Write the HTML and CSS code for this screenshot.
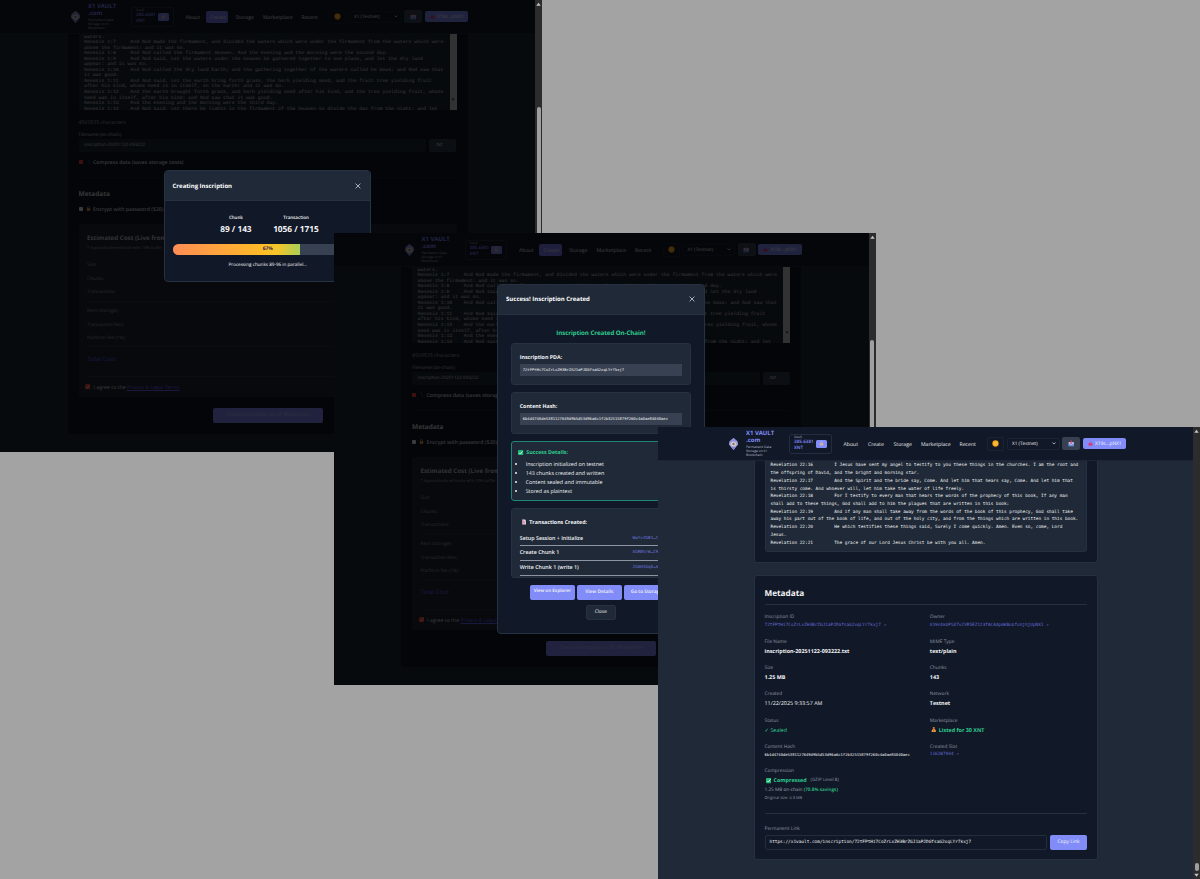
FILE: index.html
```html
<!DOCTYPE html>
<html lang="en">
<head>
<meta charset="utf-8">
<title>X1 Vault</title>
<link rel="stylesheet" href="styles.css">
</head>
<body>
<svg width="0" height="0" class="defs">
  <symbol id="logo" viewBox="0 0 18 24"><path d="M9 0 17 7 18 13 9 24 0 13 1 7Z" fill="#a5a8d8"/><path d="M9 0 17 7 9 10 1 7Z" fill="#8d92e0"/><circle cx="9" cy="12" r="5" fill="#d9cfc4"/><circle cx="9" cy="12" r="2.4" fill="#776f80"/><path d="M3 17 9 18 15 17 9 24Z" fill="#7b80cf"/></symbol>
  <symbol id="sun" viewBox="0 0 20 20"><circle cx="10" cy="10" r="9" fill="#f59e0b"/><circle cx="10" cy="10" r="6.5" fill="#fdb73e"/></symbol>
  <symbol id="lock" viewBox="0 0 20 20"><path d="M6 10V6a4 4 0 0 1 8 0v4" fill="none" stroke="#c9b8b0" stroke-width="2.4"/><rect x="3" y="9" width="14" height="10" rx="2" fill="#f2a33a"/></symbol>
  <symbol id="coin" viewBox="0 0 20 20"><path d="M6 10V6a4 4 0 0 1 8 0v4" fill="none" stroke="#cfc4d8" stroke-width="2.4"/><rect x="3" y="9" width="14" height="9" rx="2" fill="#d9b29a"/></symbol>
  <symbol id="redlock" viewBox="0 0 20 20"><path d="M6 10V7a4 4 0 0 1 8 0v3" fill="none" stroke="#b0589a" stroke-width="2.4"/><rect x="2" y="9" width="16" height="9" rx="2" fill="#e0306a"/></symbol>
  <symbol id="inbox" viewBox="0 0 20 20"><path d="M2 6h16v13H2Z" fill="#b9c3ee"/><path d="M10 1v10M6 8l4 4 4-4" fill="none" stroke="#e0457b" stroke-width="2.6"/><path d="M2 13h5l1 2h4l1-2h5v6H2Z" fill="#5b8de0"/></symbol>
  <symbol id="chev" viewBox="0 0 10 6"><path d="M1 1 5 5 9 1" fill="none" stroke="#e5e7eb" stroke-width="1.8"/></symbol>
  <symbol id="close" viewBox="0 0 10 10"><path d="M1 1 9 9M9 1 1 9" fill="none" stroke="#d1d5db" stroke-width="1.3"/></symbol>
  <symbol id="okbox" viewBox="0 0 20 20"><rect width="20" height="20" rx="3" fill="#22b573"/><path d="M4 10 8.5 14.500 16 5" fill="none" stroke="#e9fff5" stroke-width="3"/></symbol>
  <symbol id="doc" viewBox="0 0 16 20"><path d="M1 1h10l4 4v14H1Z" fill="#e5d6e4"/><path d="M4 8h8M4 11h8M4 14h8" stroke="#b76a94" stroke-width="1.5"/><path d="M1 1h4v18H1Z" fill="#d08aa8"/></symbol>
  <symbol id="bag" viewBox="0 0 20 20"><path d="M6 1h8l-2 5c4 3 6 6 6 9 0 3-3 4-8 4s-8-1-8-4c0-3 2-6 6-9Z" fill="#f0a040"/><path d="M10 9v7M8 11h4M8 14h4" stroke="#8a4a10" stroke-width="1.6"/><path d="M6 5h8" stroke="#d33d2a" stroke-width="2"/></symbol>
  <symbol id="zip" viewBox="0 0 20 20"><path d="M6 2c6 0 2 8 6 8s-2 8 4 8" fill="none" stroke="#5560c0" stroke-width="2.500"/></symbol>
  <symbol id="tick" viewBox="0 0 20 20"><rect width="20" height="20" rx="4" fill="#f04438"/><path d="M4 10 8.500 14.500 16 5" fill="none" stroke="#fff" stroke-width="2.600"/></symbol>
  <symbol id="up" viewBox="0 0 10 8"><path d="M5 1 9.500 7H.5Z" fill="#c4c4c4"/></symbol>
</svg>

<main class="desktop">

  <section class="window w1">
    <div class="page">
      <header class="top">
        <svg class="logo"><use href="#logo"/></svg>
        <div class="brand"><b>X1 VAULT<br>.com</b><small>Permanent Data<br>Storage on X1<br>Blockchain</small></div>
        <div class="vault"><div class="bal"><small>Vault</small><span>385.6381<br>XNT</span></div><i class="lockbtn"><svg><use href="#coin"/></svg></i></div>
        <nav><a>About</a><a class="on">Create</a><a>Storage</a><a>Marketplace</a><a>Recent</a></nav>
        <i class="theme"><svg><use href="#sun"/></svg></i>
        <div class="select">X1 (Testnet)<svg><use href="#chev"/></svg></div>
        <i class="inbox"><svg><use href="#inbox"/></svg></i>
        <div class="addr"><svg><use href="#redlock"/></svg>X19s...pNX1</div>
      </header>
      <div class="form">
        <div class="area"><pre>waters.
Genesis 1:7	And God made the firmament, and divided the waters which were under the firmament from the waters which were
above the firmament: and it was so.
Genesis 1:8	And God called the firmament Heaven. And the evening and the morning were the second day.
Genesis 1:9	And God said, Let the waters under the heaven be gathered together to one place, and let the dry land
appear: and it was so.
Genesis 1:10	And God called the dry land Earth; and the gathering together of the waters called he Seas: and God saw that
it was good.
Genesis 1:11	And God said, Let the earth bring forth grass, the herb yielding seed, and the fruit tree yielding fruit
after his kind, whose seed is in itself, on the earth: and it was so.
Genesis 1:12	And the earth brought forth grass, and herb yielding seed after his kind, and the tree yielding fruit, whose
seed was in itself, after his kind: and God saw that it was good.
Genesis 1:13	And the evening and the morning were the third day.
Genesis 1:14	And God said, Let there be lights in the firmament of the heaven to divide the day from the night; and let</pre><div class="bar"><svg><use href="#up"/></svg></div></div>
        <p class="chars">4509535 characters</p>
        <p class="flabel">Filename (on-chain)</p>
        <div class="fname"><div class="inp">inscription-20251122-093222</div><div class="ext">.txt</div></div>
        <p class="check"><i class="dot"></i><svg><use href="#zip"/></svg><b>Compress data (saves storage costs)</b></p>
        <h3>Metadata</h3>
        <p class="check enc"><i class="box"></i><svg><use href="#lock"/></svg><b>Encrypt with password ($20)</b></p>
        <div class="cost">
          <h4>Estimated Cost (Live from Blockchain)</h4>
          <p class="sub">* Approximate estimate with 10% buffer</p>
          <ul><li>Size:</li><li>Chunks:</li><li>Transactions:</li></ul>
          <ul><li>Rent (storage):</li><li>Transaction fees:</li><li>Platform fee (1%):</li></ul>
          <p class="total">Total Cost:</p>
          <p class="agree"><svg><use href="#tick"/></svg>I agree to the&nbsp;<u>Privacy &amp; Legal Terms</u></p>
        </div>
        <div class="submit">Create Inscription on X1 Blockchain</div>
      </div>
      <div class="overlay">
        <div class="modal">
          <div class="mhead">Creating Inscription<svg><use href="#close"/></svg></div>
          <div class="mbody progress">
            <div class="stats"><div><small>Chunk</small><b>89 / 143</b></div><div><small>Transaction</small><b>1056 / 1715</b></div></div>
            <div class="track"><div class="fill" style="width:67%"></div><span>67%</span></div>
            <p>Processing chunks 89-96 in parallel...</p>
          </div>
        </div>
      </div>
    </div>
    <div class="scroll"><svg><use href="#up"/></svg><div class="thumb"></div></div>
  </section>

  <section class="window w2">
    <div class="page">
      <header class="top">
        <svg class="logo"><use href="#logo"/></svg>
        <div class="brand"><b>X1 VAULT<br>.com</b><small>Permanent Data<br>Storage on X1<br>Blockchain</small></div>
        <div class="vault"><div class="bal"><small>Vault</small><span>385.6381<br>XNT</span></div><i class="lockbtn"><svg><use href="#coin"/></svg></i></div>
        <nav><a>About</a><a class="on">Create</a><a>Storage</a><a>Marketplace</a><a>Recent</a></nav>
        <i class="theme"><svg><use href="#sun"/></svg></i>
        <div class="select">X1 (Testnet)<svg><use href="#chev"/></svg></div>
        <i class="inbox"><svg><use href="#inbox"/></svg></i>
        <div class="addr"><svg><use href="#redlock"/></svg>X19s...pNX1</div>
      </header>
      <div class="form">
        <div class="area"><pre>waters.
Genesis 1:7	And God made the firmament, and divided the waters which were under the firmament from the waters which were
above the firmament: and it was so.
Genesis 1:8	And God called the firmament Heaven. And the evening and the morning were the second day.
Genesis 1:9	And God said, Let the waters under the heaven be gathered together to one place, and let the dry land
appear: and it was so.
Genesis 1:10	And God called the dry land Earth; and the gathering together of the waters called he Seas: and God saw that
it was good.
Genesis 1:11	And God said, Let the earth bring forth grass, the herb yielding seed, and the fruit tree yielding fruit
after his kind, whose seed is in itself, on the earth: and it was so.
Genesis 1:12	And the earth brought forth grass, and herb yielding seed after his kind, and the tree yielding fruit, whose
seed was in itself, after his kind: and God saw that it was good.
Genesis 1:13	And the evening and the morning were the third day.
Genesis 1:14	And God said, Let there be lights in the firmament of the heaven to divide the day from the night; and let</pre><div class="bar"><svg><use href="#up"/></svg></div></div>
        <p class="chars">4509535 characters</p>
        <p class="flabel">Filename (on-chain)</p>
        <div class="fname"><div class="inp">inscription-20251122-093222</div><div class="ext">.txt</div></div>
        <p class="check"><i class="dot"></i><svg><use href="#zip"/></svg><b>Compress data (saves storage costs)</b></p>
        <h3>Metadata</h3>
        <p class="check enc"><i class="box"></i><svg><use href="#lock"/></svg><b>Encrypt with password ($20)</b></p>
        <div class="cost">
          <h4>Estimated Cost (Live from Blockchain)</h4>
          <p class="sub">* Approximate estimate with 10% buffer</p>
          <ul><li>Size:</li><li>Chunks:</li><li>Transactions:</li></ul>
          <ul><li>Rent (storage):</li><li>Transaction fees:</li><li>Platform fee (1%):</li></ul>
          <p class="total">Total Cost:</p>
          <p class="agree"><svg><use href="#tick"/></svg>I agree to the&nbsp;<u>Privacy &amp; Legal Terms</u></p>
        </div>
        <div class="submit">Create Inscription on X1 Blockchain</div>
      </div>
      <div class="overlay">
        <div class="modal tall">
          <div class="mhead">Success! Inscription Created<svg><use href="#close"/></svg></div>
          <div class="mbody success">
            <h2>Inscription Created On-Chain!</h2>
            <div class="card"><b>Inscription PDA:</b><code>72tFPtHi7CoZrLxZH3BrZGJ1aPJDGfsaG2xqLYr7kxj7</code></div>
            <div class="card"><b>Content Hash:</b><code class="hash">6b4d4740de5381127649d9b5d53d96a6c1f2b32515879f260c4a0ae84040aec</code></div>
            <div class="card green"><b><svg><use href="#okbox"/></svg>Success Details:</b><ul><li>Inscription initialized on testnet</li><li>143 chunks created and written</li><li>Content sealed and immutable</li><li>Stored as plaintext</li></ul></div>
            <div class="card txs"><b><svg><use href="#doc"/></svg>Transactions Created:</b>
              <div class="tx">Setup Session + Initialize<a>WwYvZGB1…t8kPq2</a></div>
              <div class="tx">Create Chunk 1<a>XGRB5rW…C9fLwa</a></div>
              <div class="tx">Write Chunk 1 (write 1)<a>2GAH5Gq6…m4TsxV</a></div>
            </div>
            <div class="btns"><span class="ex">View on Explorer</span><span>View Details</span><span>Go to Storage</span></div>
            <div class="closebtn">Close</div>
          </div>
        </div>
      </div>
    </div>
    <div class="scroll"><svg><use href="#up"/></svg><div class="thumb"></div></div>
  </section>

  <section class="window w3">
    <div class="page">
      <header class="top">
        <svg class="logo"><use href="#logo"/></svg>
        <div class="brand"><b>X1 VAULT<br>.com</b><small>Permanent Data<br>Storage on X1<br>Blockchain</small></div>
        <div class="vault"><div class="bal"><small>Vault</small><span>385.6381<br>XNT</span></div><i class="lockbtn"><svg><use href="#coin"/></svg></i></div>
        <nav><a>About</a><a>Create</a><a>Storage</a><a>Marketplace</a><a>Recent</a></nav>
        <i class="theme"><svg><use href="#sun"/></svg></i>
        <div class="select">X1 (Testnet)<svg><use href="#chev"/></svg></div>
        <i class="inbox"><svg><use href="#inbox"/></svg></i>
        <div class="addr"><svg><use href="#redlock"/></svg>X19s...pNX1</div>
      </header>
      <div class="panel reader"><pre>Revelation 22:16	I Jesus have sent my angel to testify to you these things in the churches. I am the root and
the offspring of David, and the bright and morning star.
Revelation 22:17	And the Spirit and the bride say, Come. And let him that hears say, Come. And let him that
is thirsty come. And whoever will, let him take the water of life freely.
Revelation 22:18	For I testify to every man that hears the words of the prophecy of this book, If any man
shall add to these things, God shall add to him the plagues that are written in this book:
Revelation 22:19	And if any man shall take away from the words of the book of this prophecy, God shall take
away his part out of the book of life, and out of the holy city, and from the things which are written in this book.
Revelation 22:20	He which testifies these things said, Surely I come quickly. Amen. Even so, come, Lord
Jesus.
Revelation 22:21	The grace of our Lord Jesus Christ be with you all. Amen.</pre></div>
      <div class="panel meta">
        <h2>Metadata</h2>
        <dl>
          <div><dt>Inscription ID</dt><dd class="key">72tFPtHi7CoZrLxZH3BrZGJ1aPJDGfsaG2xqLYr7kxj7 ↗</dd></div>
          <div><dt>Owner</dt><dd class="key">X19s4kbPSX7v2VR5EZ1z3fACAXpmKBobfohjhjUpNX1 ↗</dd></div>
          <div><dt>File Name</dt><dd><b>inscription-20251122-093222.txt</b></dd></div>
          <div><dt>MIME Type</dt><dd><b>text/plain</b></dd></div>
          <div><dt>Size</dt><dd><b>1.25 MB</b></dd></div>
          <div><dt>Chunks</dt><dd><b>143</b></dd></div>
          <div><dt>Created</dt><dd>11/22/2025 9:33:57 AM</dd></div>
          <div><dt>Network</dt><dd><b>Testnet</b></dd></div>
          <div><dt>Status</dt><dd class="ok">✓ Sealed</dd></div>
          <div><dt>Marketplace</dt><dd class="ok listed"><svg><use href="#bag"/></svg><b>Listed for 30 XNT</b></dd></div>
          <div><dt>Content Hash</dt><dd class="key hash">6b4d4740de5381127649d9b5d53d96a6c1f2b32515879f260c4a0ae84040aec</dd></div>
          <div><dt>Created Slot</dt><dd class="key slot">116287934 ↗</dd></div>
          <div><dt>Compression</dt><dd class="comp"><svg><use href="#okbox"/></svg><b>Compressed</b><small>(GZIP Level 8)</small></dd><dd class="ratio">1.25 MB on-chain <b>(70.8% savings)</b></dd><dd class="orig">Original size: 4.3 MB</dd></div>
        </dl>
        <div class="link"><p>Permanent Link</p><div><code>https://x1vault.com/inscription/72tFPtHi7CoZrLxZH3BrZGJ1aPJDGfsaG2xqLYr7kxj7</code><span>Copy Link</span></div></div>
      </div>
    </div>
    <div class="scroll"><svg><use href="#up"/></svg><div class="thumb"></div><svg class="down"><use href="#up"/></svg></div>
  </section>
</main>
</body>
</html>
```

FILE: styles.css
```css
* { box-sizing: border-box; margin: 0; padding: 0; }
html, body { width: 1200px; height: 879px; overflow: hidden; }
body { background: #a3a3a3; font-family: "Open Sans", "Noto Sans", sans-serif; font-size: 5.4px; line-height: 8px; color: #f3f4f6; text-rendering: geometricPrecision; }
i { font-style: normal; }
svg { display: block; flex: none; }
ul { list-style: none; }
.defs { position: absolute; }
.desktop { position: relative; width: 1200px; height: 879px; background: #a3a3a3; overflow: hidden; }

/* windows placed on the desktop */
.window { position: absolute; width: 542px; height: 452px; display: flex; overflow: hidden; background: #1f2937; }
.w1 { left: 0; top: 0; }
.w2 { left: 333.500px; top: 233px; }
.w3 { left: 658px; top: 427px; }
.page { position: relative; width: 535px; height: 452px; overflow: hidden; background: #1f2937; }
.scroll { width: 7px; background: #2c2c2c; display: flex; flex-direction: column; align-items: center; padding-top: 1.500px; }
.scroll svg { width: 5px; height: 4.500px; }
.thumb { width: 4px; height: 350px; margin-top: 101px; border-radius: 2px; background: #9f9f9f; }
.w3 .thumb { height: 8px; margin-top: 430px; }
.down { transform: rotate(180deg); margin-top: 2px; }

/* header */
.top { height: 34px; display: flex; align-items: center; padding-left: 71px; background: #111827; border-bottom: 1px solid #1b2536; }
.logo { width: 9px; height: 12px; margin-right: 8px; }
.brand { width: 43px; }
.brand b { display: block; font-size: 5.950px; line-height: 7px; color: #818cf8; }
.brand small { display: block; font-size: 3.300px; line-height: 4.200px; color: #b6bcc8; padding-top: .8px; }
.vault { width: 42.500px; height: 20px; border: 1px solid #222d40; border-radius: 2px; display: flex; align-items: center; padding: 0 4px 0 4px; justify-content: space-between; }
.bal small { display: block; font-size: 3.500px; line-height: 4px; color: #aab1bf; }
.bal span { display: block; font-size: 4.600px; line-height: 5.500px; color: #818cf8; font-weight: 600; }
.lockbtn { width: 11px; height: 8px; border-radius: 1.500px; background: #818cf8; display: grid; place-items: center; }
.lockbtn svg { width: 5px; height: 5px; }
.top nav { display: grid; grid-template-columns: 24.500px 25.500px 27.500px 38.500px 27.500px; padding-left: 12px; width: 155.500px; font-size: 5.150px; line-height: 12px; color: #e5e7eb; }
.top nav a { white-space: nowrap; }
.top nav .on { background: #757bf2; border-radius: 2px; margin: 0 7.500px 0 -4.500px; padding-left: 4.500px; width: 22.500px; }
.theme { width: 17px; height: 14px; border: 1px solid #1a2434; border-radius: 2px; display: grid; place-items: center; }
.theme svg { width: 7px; height: 7px; }
.select { width: 53px; height: 12px; margin-left: 2.500px; border: 1px solid #1a2434; border-radius: 2px; display: flex; align-items: center; justify-content: space-between; padding: 0 3px 0 4.500px; font-size: 4.700px; }
.select svg { width: 4px; height: 2.600px; }
.inbox { width: 18px; height: 13px; margin-left: 2.500px; border-radius: 2px; background: #374151; display: grid; place-items: center; }
.inbox svg { width: 6.500px; height: 6.500px; }
.addr { width: 43.500px; height: 11px; margin-left: 2.500px; border-radius: 2px; background: #818cf8; display: flex; align-items: center; gap: 2.500px; padding-left: 5px; font-size: 4.850px; }
.addr svg { width: 5px; height: 5px; }

/* create form */
.form { width: 400px; height: 400px; margin-left: 67.500px; padding: 0 11px; background: #0f1623; border-radius: 0 0 4px 4px; }
.area { height: 76px; background: #1f2937; display: flex; justify-content: space-between; overflow: hidden; }
.area pre { padding: .9px 0 0 5.500px; margin-top: -.4px; font-family: "Liberation Mono", monospace; font-size: 4.840px; line-height: 5.540px; tab-size: 8; color: #d1d5db; }
.bar { width: 7px; background: #c8c8c8; display: flex; align-items: flex-end; padding: 0 1.500px 9px; }
.bar svg { width: 4px; height: 3px; transform: rotate(180deg); filter: brightness(.3); }
.chars { padding-top: 8.200px; color: #9ca3af; font-size: 5.200px; }
.flabel { padding-top: 4.800px; font-size: 4.700px; color: #c3c8d1; }
.fname { display: flex; gap: 3px; padding-top: .5px; }
.inp { width: 347.500px; height: 12.500px; line-height: 12.500px; background: #1f2937; padding-left: 5.500px; border-radius: 2px; font-size: 4.500px; color: #d1d5db; }
.ext { width: 27px; height: 12.500px; line-height: 12.500px; background: #2d3849; border-radius: 2px; padding-left: 6.500px; font-size: 4.500px; }
.check { display: flex; align-items: center; padding-top: 6px; height: 14px; font-size: 5.200px; color: #d1d5db; }
.check b { font-weight: 600; }
.check svg { width: 5px; height: 5px; margin: 0 2.500px 0 3px; }
.dot, .box { width: 4px; height: 4px; background: #f04438; border-radius: 1px; }
.box { background: #e5e7eb; }
.form h3 { border-top: 1px solid #1a2332; margin-top: 11.500px; padding-top: 10.600px; line-height: 10px; font-size: 6.500px; color: #d1d5db; }
.enc { padding-top: 0; margin-top: 2.900px; }
.cost { height: 173px; margin-top: 8px; padding: 9.200px 8.500px 0; background: #1c2533; border-radius: 3px; color: #9ca3af; font-size: 4.700px; }
.cost h4 { font-size: 6.200px; line-height: 10px; color: #c3c8d1; }
.sub { font-size: 4px; line-height: 12px; margin-bottom: 4.200px; }
.cost ul { border-bottom: 1px solid #253042; line-height: 13.300px; height: 43px; }
.cost ul + ul { height: 45px; padding-top: 3px; }
.total { height: 30px; line-height: 24px; border-bottom: 1px solid #253042; color: #6366f1; font-size: 6px; }
.agree { display: flex; align-items: center; height: 19px; color: #d1d5db; font-size: 5.200px; }
.agree svg { width: 5.500px; height: 5.500px; margin: 0 3px 0 -2px; }
.agree u { color: #6366f1; }
.submit { width: 110px; height: 15px; line-height: 15px; margin: 11px 0 0 134px; background: #858cf8; border-radius: 2px; text-align: center; font-size: 5.100px; color: #b4b9fa; }

/* dialogs */
.overlay { position: absolute; inset: 0; background: rgba(0, 0, 0, .75); backdrop-filter: blur(.7px); display: flex; align-items: center; justify-content: center; }
.modal { width: 207.500px; height: 112px; background: #111827; border: 1px solid #263142; border-radius: 4px; overflow: hidden; }
.tall { height: 350px; }
.mhead { height: 29.500px; display: flex; align-items: center; justify-content: space-between; padding: .5px 9px 0 7.800px; background: #1f2937; border-bottom: 1px solid #263142; font-size: 6px; font-weight: 700; color: #fff; }
.tall .mhead { padding-top: 0; }
.mhead svg { width: 6px; height: 6px; }
.progress { padding: 13.300px 7.500px 0 8px; }
.stats { display: flex; justify-content: center; gap: 21.500px; text-align: center; padding-left: 3.500px; }
.stats small { display: block; font-size: 4.500px; line-height: 8px; font-weight: 600; }
.stats b { display: block; font-size: 8.300px; line-height: 16px; }
.track { position: relative; margin-top: 6px; height: 11px; border-radius: 5.500px; background: #374151; overflow: hidden; }
.fill { height: 11px; background: linear-gradient(90deg, #ff8c55, #fdbb26 70%, #f5c52a 82%, #a9cf58); }
.track span { position: absolute; inset: 0; text-align: center; font-size: 5px; line-height: 11px; font-weight: 700; color: #3b2a50; }
.progress p { text-align: center; padding-top: 5.800px; font-size: 4.600px; font-weight: 500; }
.success { padding: 0 13px 0 12.800px; }
.success h2 { height: 28.200px; padding-top: 13.500px; line-height: 10px; font-size: 6.200px; text-align: center; color: #2ecc8f; font-weight: 700; letter-spacing: -.08px; }
.card { height: 42px; margin-bottom: 7.400px; padding: 8.900px 7.700px 0; background: #1f2937; border: 1px solid #263142; border-radius: 3px; }
.card b { display: flex; align-items: center; line-height: 8px; font-size: 5.300px; }
.card code { display: block; height: 12px; margin-top: 3.100px; padding-left: 3px; background: #374151; font-family: "DejaVu Sans Mono", monospace; font-size: 3.830px; line-height: 12px; white-space: nowrap; }
.card .hash { font-size: 3.840px; }
.green { height: 59.500px; border-color: #1f8577; padding: 6px 6px 0; }
.green b { color: #2ecc8f; }
.green b svg { width: 5.500px; height: 5.500px; margin-right: 2.800px; }
.green ul { list-style: disc; padding: 3.400px 0 0 7.600px; line-height: 8.900px; font-size: 5.350px; }
.txs { height: 70px; overflow: hidden; }
.txs b { margin-bottom: 5.300px; }
.txs b svg { width: 4.500px; height: 6px; margin: 0 3px 0 2px; }
.tx { display: flex; justify-content: space-between; height: 14.700px; line-height: 13.500px; border-bottom: 1px solid #8d95a2; font-size: 5.350px; font-weight: 600; }
.tx a { color: #6c75dd; font-family: "DejaVu Sans Mono", monospace; font-size: 4.300px; font-weight: 400; width: 49.500px; text-align: left; white-space: nowrap; }
.btns { display: flex; margin-left: 19px; margin-top: -.3px; gap: 2.500px; text-align: center; font-size: 4.750px; font-weight: 600; }
.btns span { flex: none; width: 44.500px; height: 15px; line-height: 15px; background: #818cf8; border-radius: 2px; white-space: nowrap; }
.btns .ex { line-height: 13px; font-size: 4.600px; }
.closebtn { width: 30px; height: 15px; margin: 4.700px auto 0; line-height: 13px; background: #1f2937; border: 1px solid #263142; border-radius: 2px; text-align: center; font-size: 4.800px; }

/* inscription view */
.panel { width: 344px; margin-left: 96px; padding: 0 10px 0 9.500px; background: #111827; border: 1px solid #253042; border-radius: 3px; }
.reader { height: 102px; border-top: 0; border-radius: 0 0 3px 3px; }
.reader pre { height: 91px; padding: 1.300px 0 0 5px; background: #1f2937; border: 1px solid #253042; border-top: 0; border-radius: 0 0 3px 3px; font-family: "DejaVu Sans Mono", monospace; font-size: 4.410px; line-height: 7.740px; tab-size: 8; }
.meta { height: 285.500px; margin-top: 11.500px; }
.meta h2 { height: 29px; line-height: 35px; font-size: 8.200px; border-bottom: 1px solid #253042; }
.meta dl { height: 209.500px; padding-top: 8.200px; display: grid; grid-template-columns: 165.300px 1fr; grid-template-rows: 25.500px 26px 26.200px 26.300px 26px 24.500px 1fr; border-bottom: 1px solid #253042; white-space: nowrap; }
dt { font-size: 4.800px; line-height: 8px; color: #8f97a6; }
dd { font-size: 5.400px; line-height: 10px; }
.key { font-family: "DejaVu Sans Mono", monospace; font-size: 4.400px; color: #646dd8; line-height: 10px; }
.hash { color: #f3f4f6; font-size: 3.830px; line-height: 8px; }
.slot { line-height: 8px; }
.ok, .comp b, .ratio b { color: #2ecc8f; }
.ratio b { font-weight: 600; }
.listed, .comp { display: flex; align-items: center; }
.listed svg { width: 5.500px; height: 5.500px; margin: 0 2.500px 0 1px; }
.comp { line-height: 11.300px; }
.comp svg { width: 5.500px; height: 5.500px; margin: 0 2.500px 0 1px; }
.comp small { font-size: 4.500px; color: #8f97a6; padding-left: 4px; }
.ratio { font-size: 4.700px; line-height: 9px; color: #9ca3af; }
.orig { font-size: 4px; line-height: 8px; color: #8f97a6; }
.link { padding-top: 10.500px; }
.link p { font-size: 4.800px; color: #8f97a6; line-height: 8px; }
.link div { display: flex; gap: 3.500px; padding-top: 2.300px; }
.link code { width: 282px; height: 15px; padding-left: 4px; border: 1px solid #222d40; border-radius: 2px; font-family: "DejaVu Sans Mono", monospace; font-size: 4.410px; line-height: 13px; }
.link span { flex: 1; height: 15px; line-height: 15px; text-align: center; background: #818cf8; border-radius: 2px; font-size: 4.900px; }
```
